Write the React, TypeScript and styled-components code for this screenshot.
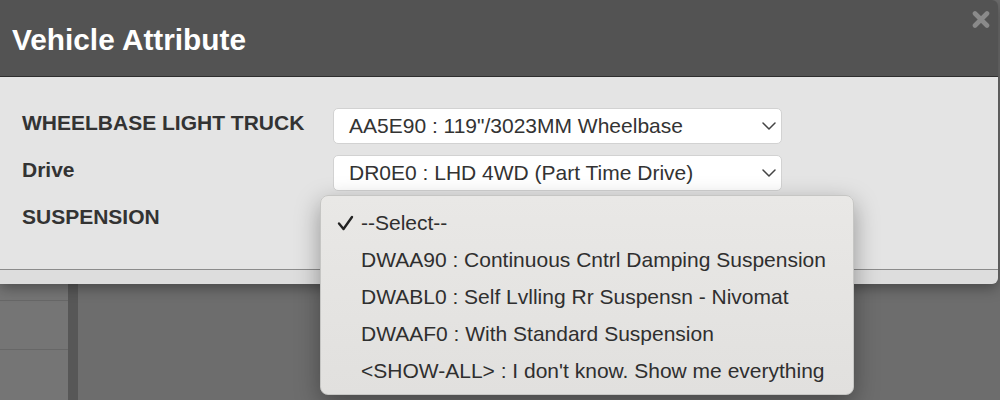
import styled, { createGlobalStyle } from 'styled-components'

const ATTRIBUTES = [
  { label: 'WHEELBASE LIGHT TRUCK', value: 'AA5E90 : 119"/3023MM Wheelbase' },
  { label: 'Drive', value: 'DR0E0 : LHD 4WD (Part Time Drive)' },
  { label: 'SUSPENSION', value: '', isOpen: true }
]

const SUSPENSION_OPTIONS = [
  '--Select--',
  'DWAA90 : Continuous Cntrl Damping Suspension',
  'DWABL0 : Self Lvlling Rr Suspensn - Nivomat',
  'DWAAF0 : With Standard Suspension',
  "<SHOW-ALL> : I don't know. Show me everything"
]

const GlobalStyle = createGlobalStyle`
  body {
    margin: 0;
    background: #6d6d6d;
    font-family: "Liberation Sans", Arial, sans-serif;
  }
`

function Chevron() {
  return (
    <svg width="14" height="8" viewBox="0 0 14 8" fill="none">
      <path d="M1 1l6 6 6-6" stroke="#444" strokeWidth="1.5" strokeLinecap="round" strokeLinejoin="round" />
    </svg>
  )
}

function CheckMark() {
  return (
    <svg width="17" height="16" viewBox="0 0 17 16" fill="none">
      <path d="M2 8.5l4.5 5.5L15 2" stroke="#222" strokeWidth="2.4" strokeLinecap="round" strokeLinejoin="round" />
    </svg>
  )
}

function CloseIcon() {
  return (
    <svg width="18" height="19" viewBox="0 0 18 19" fill="none">
      <path d="M3 3.5l12 12M15 3.5l-12 12" stroke="#8a8a8a" strokeWidth="4.6" strokeLinecap="round" />
    </svg>
  )
}

export default function App() {
  return (
    <Page>
      <GlobalStyle />
      <Modal>
        <Header>
          <Title>Vehicle Attribute</Title>
          <CloseButton aria-label="Close">
            <CloseIcon />
          </CloseButton>
        </Header>

        <Body>
          <AttributeGrid>
            {ATTRIBUTES.map(attribute => (
              <Row key={attribute.label}>
                <Label>{attribute.label}</Label>
                <SelectWrapper>
                  <SelectBox>
                    <span>{attribute.value}</span>
                    <Chevron />
                  </SelectBox>

                  {attribute.isOpen && (
                    <Menu>
                      {SUSPENSION_OPTIONS.map((option, index) => (
                        <MenuItem key={option}>
                          <CheckSlot>{index === 0 && <CheckMark />}</CheckSlot>
                          {option}
                        </MenuItem>
                      ))}
                    </Menu>
                  )}
                </SelectWrapper>
              </Row>
            ))}
          </AttributeGrid>
        </Body>

        <Footer />
      </Modal>

      <Backdrop>
        <SidePanel>
          <SideRow $height={16} />
          <SideRow $height={48} />
          <SideRow $height={60} />
        </SidePanel>
        <SideDivider />
        <MainArea />
      </Backdrop>
    </Page>
  )
}

const Page = styled.div`
  width: 1000px;
  height: 400px;
  display: flex;
  flex-direction: column;
  overflow: hidden;
  background: #6d6d6d;
`

const Modal = styled.div`
  position: relative;
  z-index: 2;
  width: 998px;
  display: flex;
  flex-direction: column;
  border-radius: 0 6px 6px 0;
  box-shadow: 0 4px 14px rgba(0, 0, 0, 0.35);
`

const Header = styled.div`
  height: 76px;
  display: flex;
  justify-content: space-between;
  align-items: flex-start;
  background: #535353;
  border-bottom: 1px solid #2e2e2e;
  border-radius: 0 6px 0 0;
`

const Title = styled.h1`
  margin: 0;
  padding: 25px 0 0 12px;
  color: #fff;
  font-size: 29.8px;
  font-weight: 700;
  line-height: 30px;
`

const CloseButton = styled.button`
  display: flex;
  margin: 10px 8px 0 0;
  padding: 0;
  border: 0;
  background: none;
`

const Body = styled.div`
  height: 192px;
  background: #e4e4e4;
  border-bottom: 1px solid #8b8b8b;
`

const AttributeGrid = styled.div`
  display: flex;
  flex-direction: column;
  gap: 11px;
  padding: 31px 0 0 22px;
`

const Row = styled.div`
  display: grid;
  grid-template-columns: 311px 449px;
`

const Label = styled.div`
  color: #333;
  font-size: 21px;
  font-weight: 700;
  line-height: 30px;
`

const SelectWrapper = styled.div`
  position: relative;
`

const SelectBox = styled.div`
  height: 36px;
  box-sizing: border-box;
  display: flex;
  align-items: center;
  justify-content: space-between;
  padding: 0 5px 0 15px;
  background: #fff;
  border: 1px solid #d2d2d2;
  border-radius: 5px;
  color: #333;
  font-size: 21px;
`

const Menu = styled.div`
  position: absolute;
  top: -7px;
  left: -13px;
  width: 534px;
  box-sizing: border-box;
  padding: 9px 0 5px;
  background: linear-gradient(#e9e8e6, #e1e0de);
  border: 1px solid #c6c6c4;
  border-radius: 8px;
  box-shadow: 0 8px 24px rgba(0, 0, 0, 0.35);
`

const MenuItem = styled.div`
  height: 36.8px;
  display: flex;
  align-items: center;
  padding-left: 16px;
  color: #2f2f2f;
  font-size: 21px;
  white-space: nowrap;
`

const CheckSlot = styled.span`
  width: 24px;
  display: flex;
  align-items: center;
`

const Footer = styled.div`
  height: 14px;
  background: #dddddd;
  border-radius: 0 0 6px 0;
`

const Backdrop = styled.div`
  flex: 1;
  display: flex;
`

const SidePanel = styled.div`
  width: 68px;
  background: #757575;
`

const SideRow = styled.div<{ $height: number }>`
  height: ${p => p.$height}px;
  border-bottom: 1px solid #676767;
`

const SideDivider = styled.div`
  width: 10px;
  background: #575757;
`

const MainArea = styled.div`
  flex: 1;
  background: #6d6d6d;
`
